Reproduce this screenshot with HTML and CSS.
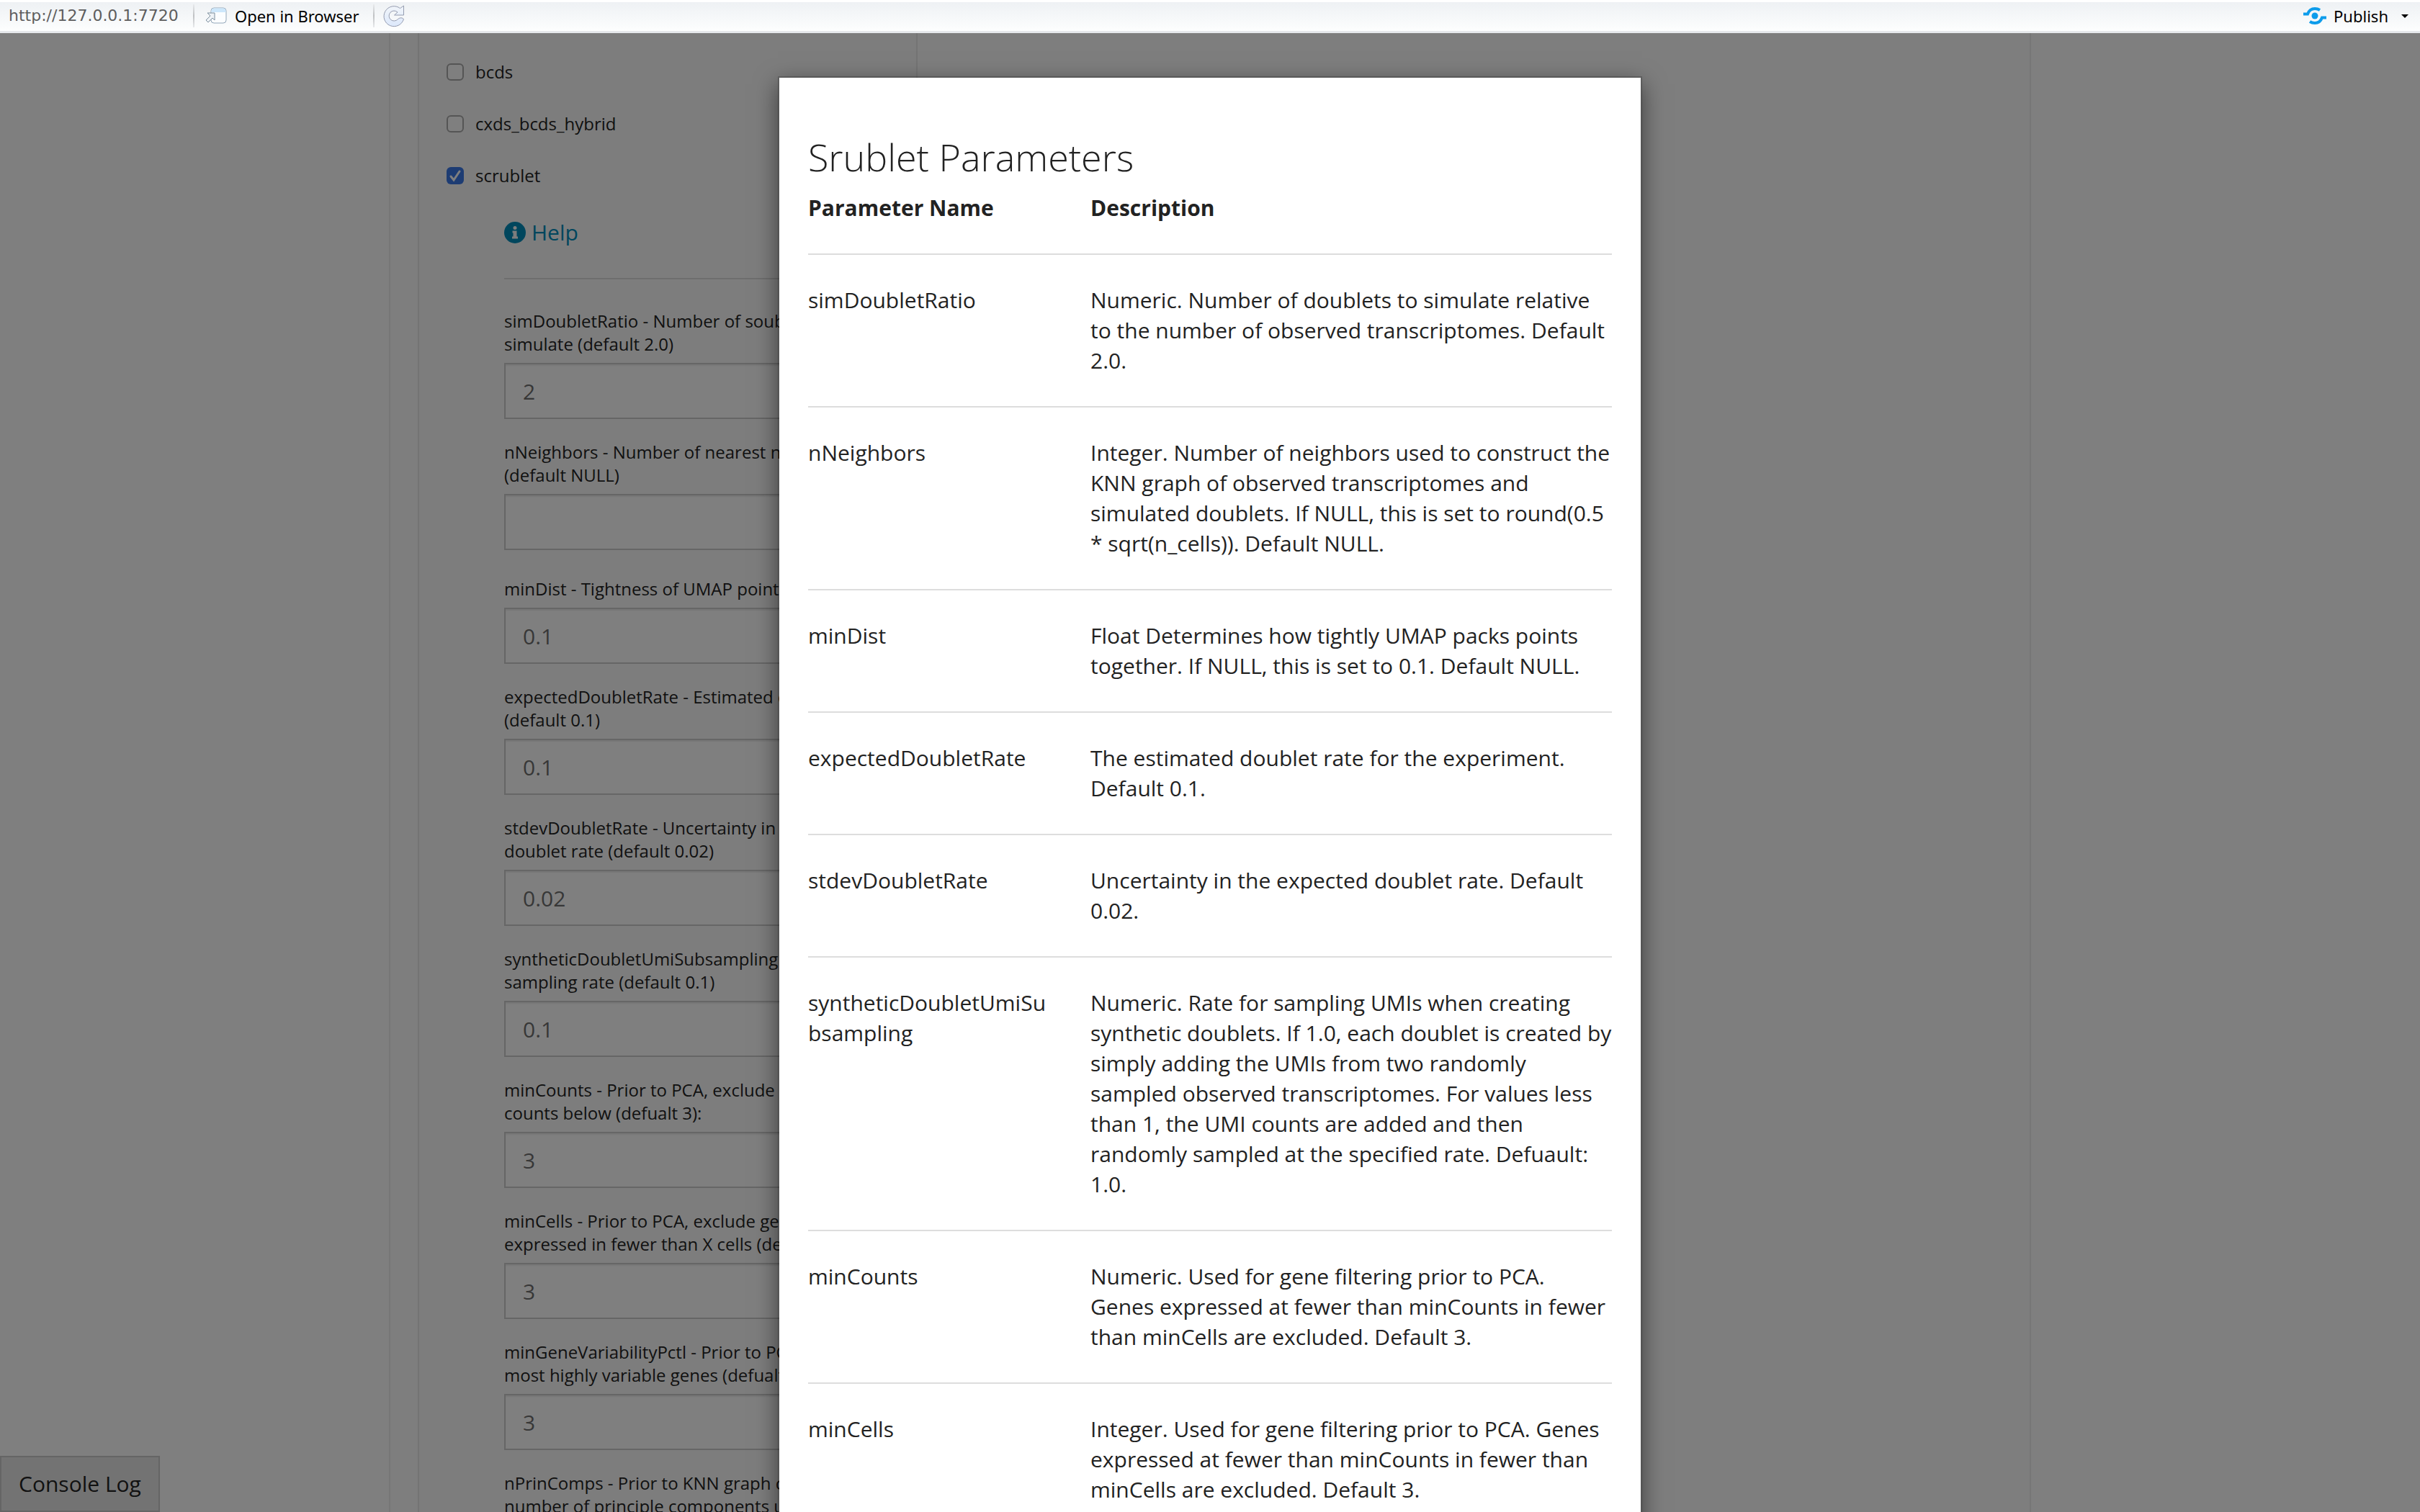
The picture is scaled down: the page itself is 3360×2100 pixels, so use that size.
FILE: index.html
```html
<!DOCTYPE html>
<html lang="en">
<head>
<meta charset="utf-8">
<title>Scrublet Parameters</title>
<link rel="stylesheet" href="styles.css">
</head>
<body>
<header class="toolbar">
  <span class="url">http://127.0.0.1:7720</span>
  <span class="separator"></span>
  <button class="tool open-browser" type="button">
    <svg class="icon-open" viewBox="0 0 32 24" aria-hidden="true">
      <rect x="9" y="1" width="21" height="21" rx="4" fill="#fbfdff" stroke="#93a7b9"/>
      <path d="M9.500 7V5a3.500 3.500 0 0 1 3.500-3.500h13A3.500 3.500 0 0 1 29.500 5v2z" fill="#cde7fb"/>
      <path d="M4 8h10v10l-3-3-6 6-3-3 6-6z" fill="#eef2f6" stroke="#7d8f9e" stroke-linejoin="round"/>
    </svg>
    Open in Browser
  </button>
  <span class="separator"></span>
  <button class="tool refresh" type="button" aria-label="Refresh">
    <svg class="icon-refresh" viewBox="0 0 30 32" aria-hidden="true">
      <defs><linearGradient id="refresh-fill" x1="0" y1="0" x2="0" y2="1"><stop offset="0" stop-color="#f1f5fa"/><stop offset="1" stop-color="#dce8fb"/></linearGradient></defs>
      <path d="M28.500 2v13H15.500l4.500-4a7 7 0 1 0 .5 9.500Q25 17 28.500 20.500A14 14 0 1 1 23.500 5.500z" fill="url(#refresh-fill)" stroke="#959cb0" stroke-linejoin="round"/>
    </svg>
  </button>
  <button class="tool publish" type="button">
    <svg class="icon-publish" viewBox="0 0 32 24" aria-hidden="true">
      <circle cx="16" cy="12" r="4.500" fill="#0d9ceb"/>
      <path d="M0 9.500h6C8 4 12 2 16 2c3 0 5 .7 7 2M32 14.500h-6C24 20 20 22 16 22c-3 0-5-.7-7-2" fill="none" stroke="#0d9ceb" stroke-width="4"/>
    </svg>
    Publish
    <svg class="icon-caret" viewBox="0 0 10 5" aria-hidden="true"><path d="M0 0h10L5 5z"/></svg>
  </button>
</header>

<div class="viewport">
  <main class="panel">
    <section class="well">
      <label class="check"><input type="checkbox">bcds</label>
      <label class="check"><input type="checkbox">cxds_bcds_hybrid</label>
      <label class="check"><input type="checkbox" checked>scrublet</label>
      <div class="options">
        <a class="help" href="#parameters">
          <svg class="icon-info" viewBox="0 0 30 30" aria-hidden="true">
            <circle cx="15" cy="15" r="15" fill="currentColor"/>
            <path d="M11.500 12.500h6v8h1.500v3h-8v-3h1.500v-5h-1z" fill="#fafafa"/>
            <circle cx="15" cy="8.500" r="2.500" fill="#fafafa"/>
          </svg>
          Help
        </a>
        <div class="field"><label for="f1">simDoubletRatio - Number of soublets to<br>simulate (default 2.0)</label><input id="f1" type="text" value="2"></div>
        <div class="field"><label for="f2">nNeighbors - Number of nearest neighbors<br>(default NULL)</label><input id="f2" type="text"></div>
        <div class="field"><label for="f3">minDist - Tightness of UMAP points</label><input id="f3" type="text" value="0.1"></div>
        <div class="field"><label for="f4">expectedDoubletRate - Estimated doublet rate<br>(default 0.1)</label><input id="f4" type="text" value="0.1"></div>
        <div class="field"><label for="f5">stdevDoubletRate - Uncertainty in the<br>doublet rate (default 0.02)</label><input id="f5" type="text" value="0.02"></div>
        <div class="field"><label for="f6">syntheticDoubletUmiSubsampling - UMI<br>sampling rate (default 0.1)</label><input id="f6" type="text" value="0.1"></div>
        <div class="field"><label for="f7">minCounts - Prior to PCA, exclude genes with<br>counts below (defualt 3):</label><input id="f7" type="text" value="3"></div>
        <div class="field"><label for="f8">minCells - Prior to PCA, exclude genes<br>expressed in fewer than X cells (default 3)</label><input id="f8" type="text" value="3"></div>
        <div class="field"><label for="f9">minGeneVariabilityPctl - Prior to PCA, keep<br>most highly variable genes (defualt 3)</label><input id="f9" type="text" value="3"></div>
        <div class="field"><label for="f10">nPrinComps - Prior to KNN graph construction,<br>number of principle components used</label><input id="f10" type="text"></div>
      </div>
    </section>
  </main>
  <button class="console" type="button">Console Log</button>

  <div class="backdrop">
    <div class="modal" role="dialog" aria-labelledby="parameters">
      <h3 id="parameters">Srublet Parameters</h3>
      <table>
        <thead><tr><th scope="col">Parameter Name</th><th scope="col">Description</th></tr></thead>
        <tbody>
          <tr><td>simDoubletRatio</td><td>Numeric. Number of doublets to simulate relative to the number of observed transcriptomes. Default 2.0.</td></tr>
          <tr><td>nNeighbors</td><td>Integer. Number of neighbors used to construct the KNN graph of observed transcriptomes and simulated doublets. If NULL, this is set to round(0.5 * sqrt(n_cells)). Default NULL.</td></tr>
          <tr><td>minDist</td><td>Float Determines how tightly UMAP packs points together. If NULL, this is set to 0.1. Default NULL.</td></tr>
          <tr><td>expectedDoubletRate</td><td>The estimated doublet rate for the experiment. Default 0.1.</td></tr>
          <tr><td>stdevDoubletRate</td><td>Uncertainty in the expected doublet rate. Default 0.02.</td></tr>
          <tr><td>syntheticDoubletUmiSubsampling</td><td>Numeric. Rate for sampling UMIs when creating synthetic doublets. If 1.0, each doublet is created by simply adding the UMIs from two randomly sampled observed transcriptomes. For values less than 1, the UMI counts are added and then randomly sampled at the specified rate. Defuault: 1.0.</td></tr>
          <tr><td>minCounts</td><td>Numeric. Used for gene filtering prior to PCA. Genes expressed at fewer than minCounts in fewer than minCells are excluded. Default 3.</td></tr>
          <tr><td>minCells</td><td>Integer. Used for gene filtering prior to PCA. Genes expressed at fewer than minCounts in fewer than minCells are excluded. Default 3.</td></tr>
        </tbody>
      </table>
    </div>
  </div>
</div>
</body>
</html>
```
FILE: styles.css
```css
* { box-sizing: border-box; }

body {
  margin: 0;
  height: 100vh;
  display: flex;
  flex-direction: column;
  overflow: hidden;
  font-family: "Open Sans", sans-serif;
  font-size: 30px;
  line-height: 42px;
  color: #222;
  background: #fff;
}

button, input { font: inherit; color: inherit; }

/* Viewer toolbar */
.toolbar {
  flex: none;
  height: 46px;
  display: flex;
  align-items: center;
  padding: 0 16px 2px 12px;
  border-top: 3px solid #fff;
  border-bottom: 3px solid #e6e8eb;
  background: linear-gradient(#eef1f4, #fdfefe);
  font-family: "Noto Sans", sans-serif;
  font-size: 22px;
  line-height: 30px;
  color: #000;
}
.url {
  width: 256px;
  font-family: "DejaVu Sans", sans-serif;
  color: #5e5e5e;
}
.separator {
  width: 2px;
  height: 32px;
  background: linear-gradient(#e8eaec, #bfc1c3, #e8eaec);
}
.tool {
  display: flex;
  align-items: center;
  padding: 0;
  border: 0;
  background: none;
}
.open-browser { width: 248px; padding-left: 14px; gap: 10px; }
.refresh { padding-left: 12px; }
.publish { margin-left: auto; gap: 10px; }
.icon-open { width: 32px; height: 24px; }
.icon-refresh { width: 30px; height: 32px; }
.icon-publish { width: 32px; height: 24px; }
.icon-caret { width: 10px; height: 5px; margin-left: 8px; }

/* App page below the toolbar */
.viewport {
  position: relative;
  flex: 1;
  min-height: 0;
  overflow: hidden;
}
.panel {
  width: 2280px;
  margin: 0 auto;
  padding: 0 38px;
  border: solid #ececec;
  border-width: 0 2px;
  background: #fdfdfd;
}
.well {
  width: 694px;
  padding: 38px 38px 0;
  border: solid #e8e8e8;
  border-width: 0 2px;
  background: #fafafa;
}
.check {
  display: flex;
  align-items: center;
  gap: 16px;
  height: 32px;
  margin-bottom: 40px;
  font-size: 24px;
  line-height: 32px;
}
.check input {
  appearance: none;
  width: 24px;
  height: 24px;
  margin: 0;
  border: 2px solid #aaa;
  border-radius: 6px;
  background: #fff;
}
.check input:checked {
  border: 0;
  background: #3b78e7 url("data:image/svg+xml,%3Csvg xmlns='http://www.w3.org/2000/svg' viewBox='0 0 24 24'%3E%3Cpath d='M6 13l4 5 8-12' fill='none' stroke='white' stroke-width='3' stroke-linecap='round'/%3E%3C/svg%3E");
}
.options { padding: 2px 0 0 80px; }
.help {
  display: flex;
  align-items: center;
  gap: 8px;
  padding-bottom: 42px;
  margin-bottom: 42px;
  border-bottom: 2px solid #ddd;
  color: #008cba;
  text-decoration: none;
}
.icon-info { width: 30px; height: 30px; }
.field { margin-bottom: 30px; }
.field label {
  display: flex;
  flex-direction: column;
  justify-content: flex-end;
  min-height: 40px;
  margin-bottom: 10px;
  font-size: 24px;
  line-height: 32px;
  white-space: nowrap;
}
.field input {
  display: block;
  width: 100%;
  height: 78px;
  padding: 0 24px;
  border: 2px solid #ccc;
  background: #fff;
  box-shadow: inset 0 2px 2px rgba(0, 0, 0, 0.08);
  color: #6f6f6f;
}
.console {
  position: absolute;
  left: 0;
  bottom: 0;
  height: 78px;
  padding: 0 24px;
  border: 2px solid #cbcbcb;
  background: #e7e7e7;
}

/* Modal dialog */
.backdrop {
  position: absolute;
  inset: 0;
  overflow: hidden;
  background: rgba(0, 0, 0, 0.5);
}
.modal {
  width: 1200px;
  margin: 60px auto;
  padding: 74px 40px 40px;
  border: 2px solid rgba(0, 0, 0, 0.2);
  background: #fff;
  background-clip: padding-box;
  box-shadow: 0 10px 30px rgba(0, 0, 0, 0.5);
}
.modal h3 {
  margin: 0 0 14px;
  font-size: 52px;
  font-weight: 300;
  line-height: 72px;
}
table {
  width: 100%;
  table-layout: fixed;
  border-spacing: 0;
}
th, td {
  padding: 42px 0;
  text-align: left;
  vertical-align: top;
  overflow-wrap: break-word;
}
th { padding-top: 0; }
td { border-top: 2px solid #ddd; }
th:first-child, td:first-child { width: 392px; padding-right: 60px; }
```
